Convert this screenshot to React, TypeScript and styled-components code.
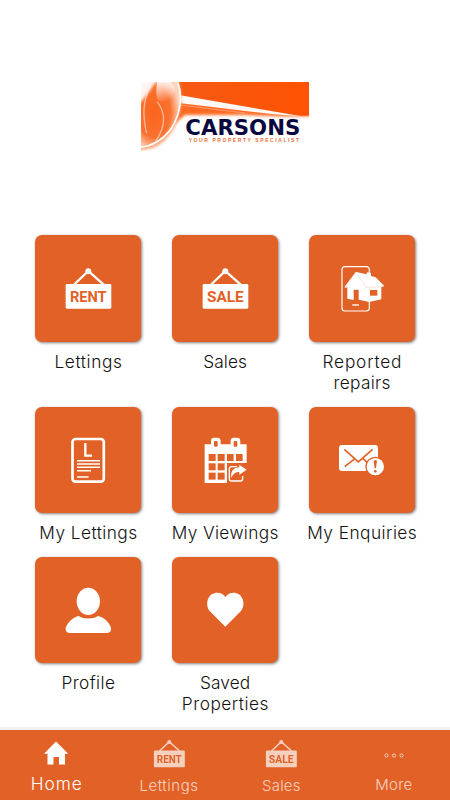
import React from 'react';
import styled, { createGlobalStyle } from 'styled-components';

const ORANGE = '#e26126';

const GlobalStyle = createGlobalStyle`
  * { box-sizing: border-box; }
  body { margin: 0; background: #fff; }
`;

const Screen = styled.div`
  width: 450px;
  height: 800px;
  display: flex;
  flex-direction: column;
  overflow: hidden;
  background: #fff;
  font-family: Inter, 'Open Sans', sans-serif;
  font-weight: 300;
`;

const Header = styled.header`
  flex: none;
  height: 235.4px;
  padding: 81px 0 0 141px;
`;

const LogoArt = styled.svg`
  display: block;
  width: 168px;
  height: 70px;
`;

const Grid = styled.main`
  flex: 1;
  display: grid;
  grid-template-columns: repeat(3, 106.3px);
  grid-template-rows: 171.3px 150px 150px;
  column-gap: 30.6px;
  padding-left: 35.1px;
`;

const Item = styled.div`
  display: flex;
  flex-direction: column;
  align-items: center;
`;

const Tile = styled.div`
  flex: none;
  width: 106.3px;
  height: 106.3px;
  border-radius: 7px;
  background: ${ORANGE};
  box-shadow: 1px 1px 3px rgba(0, 0, 0, 0.5);
`;

const TileArt = styled.svg`
  display: block;
  width: 100%;
  height: 100%;
`;

const Caption = styled.div`
  display: flex;
  flex-direction: column;
  align-items: center;
  margin-top: 9px;
`;

const Line = styled.span<{ $track: number }>`
  font-size: 17.3px;
  line-height: 21.3px;
  letter-spacing: ${(p) => p.$track}px;
  margin-right: ${(p) => -p.$track}px;
  color: #111;
  white-space: nowrap;
`;

const NavBar = styled.nav`
  flex: none;
  height: 73px;
  display: grid;
  grid-template-columns: repeat(4, 112.5px);
  background: ${ORANGE};
  border-top: 3px solid #f0f1f4;
`;

const NavItem = styled.div`
  display: flex;
  flex-direction: column;
  align-items: center;
`;

const NavIcon = styled.div<{ $dim?: boolean }>`
  height: 40px;
  padding-top: 8.5px;
  opacity: ${(p) => (p.$dim ? 0.7 : 1)};
  svg { display: block; }
`;

const NavLabel = styled.span<{ $active?: boolean; $track: number; $drop: number }>`
  font-size: ${(p) => (p.$active ? 17.3 : 15)}px;
  line-height: 20px;
  margin-top: ${(p) => p.$drop}px;
  letter-spacing: ${(p) => p.$track}px;
  margin-right: ${(p) => -p.$track}px;
  font-weight: ${(p) => (p.$active ? 350 : 300)};
  color: ${(p) => (p.$active ? '#fff' : 'rgba(255,255,255,0.72)')};
`;

const SignText = styled.text`
  font-family: Roboto, sans-serif;
  font-weight: 700;
  font-size: 45px;
  fill: ${ORANGE};
`;

const LogoName = styled.text`
  font-family: 'DejaVu Sans', sans-serif;
  font-weight: 700;
  font-size: 62px;
  fill: #08083f;
`;

const LogoTag = styled.text`
  font-family: 'Liberation Sans', sans-serif;
  font-weight: 700;
  font-size: 15px;
  fill: #e8703a;
`;

const Sign = ({ word }: { word: string }) => (
  <g>
    <path d="M116 150 L160 108 L207 150" fill="none" stroke="#fff" strokeWidth="7" />
    <circle cx="160" cy="109" r="9" fill="#fff" />
    <rect x="92" y="147" width="137" height="74" rx="4" fill="#fff" />
    <SignText x="105" y="201" textLength="110" lengthAdjust="spacingAndGlyphs">{word}</SignText>
  </g>
);

const Repairs = () => (
  <g>
    <rect x="99" y="95" width="82" height="133" rx="9" fill="none" stroke="#fff" strokeWidth="3.5" />
    <path d="M109 160 L142 111 L173 118 L174 112 L186 114 L186 123 L200 127 L226 153 L217 157 L217 193 L181 201 L149 194 L149 164 L134 164 L134 195 L115 191 L115 157 Z" fill="#fff" />
    <path d="M144 117 L172 157 L218 156" fill="none" stroke={ORANGE} strokeWidth="1" opacity="0.55" />
    <path d="M108 157 L142 112" fill="none" stroke="#fff" strokeWidth="4" />
    <rect x="183" y="165" width="22" height="17" fill={ORANGE} />
    <path d="M130 210 H150" stroke="#fff" strokeWidth="4" />
  </g>
);

const Document = () => (
  <g fill="none" stroke="#fff">
    <rect x="112.5" y="96" width="94" height="128" rx="9" strokeWidth="8" />
    <path d="M151 108 V146 H171" strokeWidth="7" />
    <path d="M126 161 H195 M126 171 H195 M126 181 H195 M126 191 H168 M126 210 H161" strokeWidth="4.5" />
  </g>
);

const Calendar = () => (
  <g>
    <path d="M98 112 H224 V168 H165 V228 H98 Z" fill="#fff" />
    <rect x="117" y="92" width="29" height="32" rx="10" fill="#fff" />
    <rect x="176" y="92" width="29" height="32" rx="10" fill="#fff" />
    <rect x="126" y="102" width="11" height="17" rx="3" fill={ORANGE} />
    <rect x="185" y="102" width="11" height="17" rx="3" fill={ORANGE} />
    <g fill={ORANGE}>
      {[110, 137].map((x) => [141, 169, 197].map((y) => <rect key={`${x}-${y}`} x={x} y={y} width="21" height="21" />))}
      <rect x="165" y="141" width="20" height="21" />
      <rect x="192" y="141" width="20" height="21" />
    </g>
    <path d="M195 179 H179 Q172 179 172 186 V215 Q172 222 179 222 H205 Q212 222 212 215 V207" fill="none" stroke="#fff" strokeWidth="4" />
    <path d="M177 213 Q175 181 202 181 V173 L224 188 L202 203 V194 Q187 194 177 213 Z" fill="#fff" />
  </g>
);

const Mail = () => (
  <g>
    <rect x="90" y="114" width="117" height="78" rx="9" fill="#fff" />
    <path d="M106 127 L148 165 L191 127 M107 179 L138 155 M162 155 L180 171" fill="none" stroke={ORANGE} strokeWidth="5" />
    <circle cx="199" cy="179" r="30" fill={ORANGE} />
    <circle cx="199" cy="179" r="26" fill="#fff" />
    <path d="M194 162 Q199 156 204 162 L201 184 H197 Z" fill={ORANGE} />
    <circle cx="199" cy="193" r="4" fill={ORANGE} />
  </g>
);

const Person = () => (
  <g fill="#fff">
    <ellipse cx="160" cy="133" rx="35" ry="41" />
    <path d="M131 177 C143 187 177 187 189 177 C209 181 223 197 228 212 Q230 227 217 228 H103 Q91 227 92 213 C98 197 112 181 131 177 Z" />
  </g>
);

const Heart = () => (
  <path d="M160 209 L113 162 C101 147 104 123 119 112 C134 103 152 107 160 120 C169 107 187 103 201 112 C216 123 219 147 207 162 Z" fill="#fff" />
);

const Logo = () => (
  <LogoArt viewBox="18 18 504 210" role="img" aria-label="Carsons">
    <defs>
      <linearGradient id="sky" x1="0" x2="1">
        <stop offset="0" stopColor="#f65a16" />
        <stop offset="1" stopColor="#ff5200" />
      </linearGradient>
      <radialGradient id="globe" cx="0.42" cy="0.48" r="0.57">
        <stop offset="0" stopColor="#f9651d" />
        <stop offset="0.65" stopColor="#fa712f" />
        <stop offset="1" stopColor="#ffd3bc" />
      </radialGradient>
      <linearGradient id="shine" x1="0" y1="0" x2="0.3" y2="1">
        <stop offset="0" stopColor="#fff" />
        <stop offset="1" stopColor="#fff" stopOpacity="0.05" />
      </linearGradient>
      <filter id="soft" x="-20%" y="-30%" width="140%" height="160%">
        <feGaussianBlur stdDeviation="5" />
      </filter>
      <filter id="fine" x="-20%" y="-20%" width="140%" height="140%">
        <feGaussianBlur stdDeviation="1.5" />
      </filter>
      <clipPath id="frame"><rect x="18" y="21" width="504" height="207" /></clipPath>
    </defs>
    <g clipPath="url(#frame)">
      <rect x="18" y="18" width="504" height="212" fill="#fff" />
      <path d="M100 76 L300 88 L560 104 V124 L430 124 L330 120 L150 120 L95 165 Z" fill="#ff6a22" filter="url(#soft)" />
      <path d="M100 0 H540 V121 L490 122 L130 64 Z" fill="url(#sky)" />
      <path d="M132 60 L500 124 L410 117 L132 84 Z" fill="#fff" opacity="0.95" filter="url(#fine)" />
      <path d="M134 90 L330 114" stroke="#fff" strokeWidth="2" opacity="0.5" />
      <path d="M130 18 C153 80 132 176 65 214 C45 224 28 224 10 225 V18 Z" fill="#ffa578" filter="url(#soft)" />
      <path d="M126 10 C149 80 125 165 63 200 C45 211 25 216 0 218 V10 Z" fill="url(#globe)" />
      <path d="M0 10 H72 C50 33 35 70 0 96 Z" fill="#fff" opacity="0.92" filter="url(#soft)" />
      <path d="M67 18 C60 55 65 86 82 80 C105 75 119 63 119 38 L102 14 Z" fill="url(#shine)" filter="url(#fine)" />
      <path d="M45 34 C24 80 22 119 35 175 M66 80 C94 115 91 156 62 199" fill="none" stroke="#fff" strokeWidth="4" opacity="0.5" filter="url(#fine)" />
      <path d="M126 16 C151 77 129 165 65 201 C48 211 33 215 16 217" fill="none" stroke="#fff" strokeWidth="5" />
      <LogoName x="151" y="180" textLength="345" lengthAdjust="spacingAndGlyphs">CARSONS</LogoName>
      <LogoTag x="161" y="202" textLength="331">YOUR PROPERTY SPECIALIST</LogoTag>
    </g>
  </LogoArt>
);

type Entry = { art: React.ReactNode; lines: [string, number][] };

const entries: Entry[] = [
  { art: <Sign word="RENT" />, lines: [['Lettings', 0.6]] },
  { art: <Sign word="SALE" />, lines: [['Sales', 0.1]] },
  { art: <Repairs />, lines: [['Reported', 0.8], ['repairs', 0.3]] },
  { art: <Document />, lines: [['My Lettings', 0.45]] },
  { art: <Calendar />, lines: [['My Viewings', 0.35]] },
  { art: <Mail />, lines: [['My Enquiries', 0.45]] },
  { art: <Person />, lines: [['Profile', 0.4]] },
  { art: <Heart />, lines: [['Saved', 0.1], ['Properties', 0.5]] },
];

const NavSign = ({ word }: { word: string }) => (
  <svg width="32.5" height="29" viewBox="88 96 144 128"><Sign word={word} /></svg>
);

export default function App() {
  return (
    <>
      <GlobalStyle />
      <Screen>
        <Header><Logo /></Header>
        <Grid>
          {entries.map(({ art, lines }) => (
            <Item key={lines[0][0]}>
              <Tile><TileArt viewBox="0 0 319 319">{art}</TileArt></Tile>
              <Caption>
                {lines.map(([text, track]) => <Line key={text} $track={track}>{text}</Line>)}
              </Caption>
            </Item>
          ))}
        </Grid>
        <NavBar>
          <NavItem>
            <NavIcon>
              <svg width="26" height="26" viewBox="0 0 26 26">
                <path d="M13 2.5 L25.2 14.8 H22 V25.5 H16 V18 H10.5 V25.5 H4.5 V14.8 H1 Z" fill="#fff" />
              </svg>
            </NavIcon>
            <NavLabel $active $track={1} $drop={4}>Home</NavLabel>
          </NavItem>
          <NavItem>
            <NavIcon $dim><NavSign word="RENT" /></NavIcon>
            <NavLabel $track={0.5} $drop={6}>Lettings</NavLabel>
          </NavItem>
          <NavItem>
            <NavIcon $dim><NavSign word="SALE" /></NavIcon>
            <NavLabel $track={0.2} $drop={6}>Sales</NavLabel>
          </NavItem>
          <NavItem>
            <NavIcon $dim>
              <svg width="22" height="32" viewBox="0 0 22 32" fill="none" stroke="#fff" strokeWidth="1">
                <circle cx="3.5" cy="16.5" r="1.6" />
                <circle cx="11" cy="16.5" r="1.6" />
                <circle cx="18.5" cy="16.5" r="1.6" />
              </svg>
            </NavIcon>
            <NavLabel $track={0.3} $drop={5}>More</NavLabel>
          </NavItem>
        </NavBar>
      </Screen>
    </>
  );
}
